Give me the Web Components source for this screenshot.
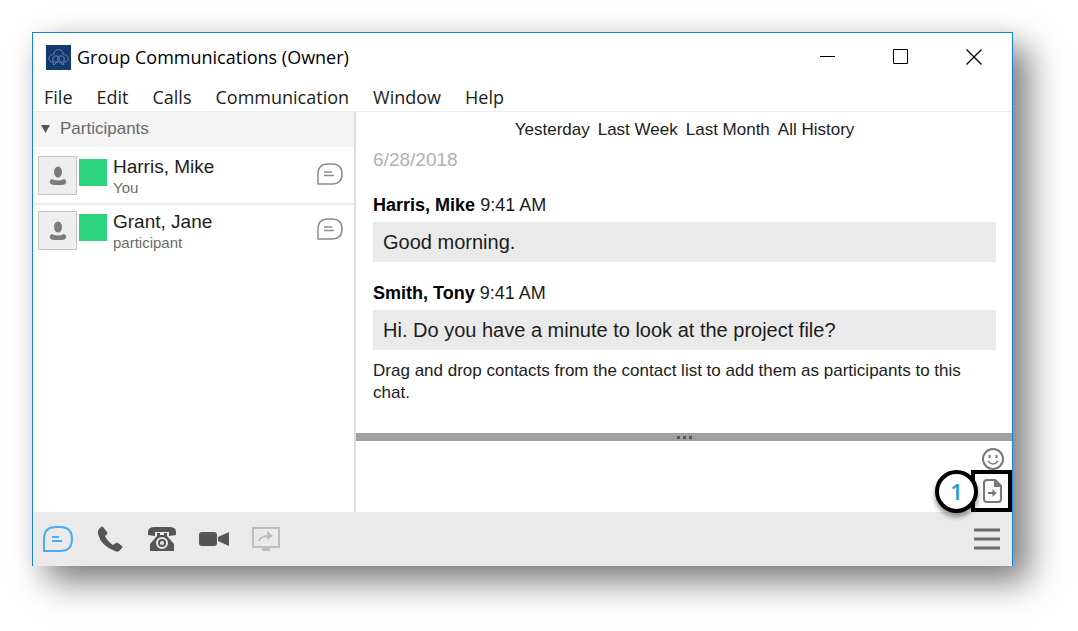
<!DOCTYPE html>
<html lang="en">
<head>
<meta charset="utf-8">
<title>Group Communications (Owner)</title>
<style>
    body {
        margin: 0;
        min-height: 100vh;
        box-sizing: border-box;
        padding: 32px 65px 65px 32px;
        display: flex;
        background: white;
        font-family: "Liberation Sans", Arial, sans-serif;
        color: #1c1c1c;
    }
</style>
</head>
<body>
<gc-window>
    <gc-title-bar slot="title">Group Communications (Owner)</gc-title-bar>
    <gc-menu-bar slot="menu" items="File,Edit,Calls,Communication,Window,Help"></gc-menu-bar>
    <gc-participants slot="sidebar">
        <gc-participant><span slot="name">Harris, Mike</span><span slot="role">You</span></gc-participant>
        <gc-participant><span slot="name">Grant, Jane</span><span slot="role">participant</span></gc-participant>
    </gc-participants>
    <gc-history slot="chat">
        <gc-message><span slot="author">Harris, Mike</span><span slot="time">9:41 AM</span>Good morning.</gc-message>
        <gc-message><span slot="author">Smith, Tony</span><span slot="time">9:41 AM</span>Hi. Do you have a minute to look at the project file?</gc-message>
    </gc-history>
    <gc-composer slot="chat"></gc-composer>
    <gc-toolbar slot="footer"></gc-toolbar>
</gc-window>

<script>
    const BUTTON_RESET = `
        button {
            display: flex;
            align-items: center;
            justify-content: center;
            margin: 0;
            padding: 0;
            border: 0;
            background: none;
            color: inherit;
            font: inherit;
        }
        svg { display: block; }
    `;

    class Window extends HTMLElement {
        constructor() {
            super();
            this.attachShadow({ mode: 'open' });
            this.shadowRoot.innerHTML = `
                <style>
                    :host {
                        flex: 1;
                        min-width: 0;
                        display: flex;
                        flex-direction: column;
                        background: white;
                        border: 1px solid #1883d7;
                        border-bottom: 0;
                        box-shadow: 16px 16px 32px rgba(0,0,0,0.5), 0 0 24px rgba(0,0,0,0.06);
                    }
                    main {
                        flex: 1;
                        display: grid;
                        grid-template-columns: minmax(200px, 33%) 1fr;
                        border-top: 1px solid #eeeeee;
                    }
                    aside { border-right: 2px solid #dddddd; }
                    section {
                        display: flex;
                        flex-direction: column;
                        min-width: 0;
                    }
                </style>
                <slot name="title"></slot>
                <slot name="menu"></slot>
                <main>
                    <aside><slot name="sidebar"></slot></aside>
                    <section><slot name="chat"></slot></section>
                </main>
                <slot name="footer"></slot>
            `;
        }
    }

    class TitleBar extends HTMLElement {
        constructor() {
            super();
            this.attachShadow({ mode: 'open' });
            this.shadowRoot.innerHTML = `
                <style>
                    ${BUTTON_RESET}
                    :host {
                        display: flex;
                        align-items: center;
                        height: 48px;
                        padding: 0 2px 0 13px;
                        font: 18px "Open Sans", "Noto Sans", sans-serif;
                        color: black;
                    }
                    h1 {
                        flex: 1;
                        margin: 0 0 0 6px;
                        font: inherit;
                    }
                    button {
                        width: 73px;
                        height: 48px;
                    }
                </style>
                <svg width="25" height="25" viewBox="0 0 25 25" fill="none" stroke="#6487b0">
                    <rect width="25" height="25" fill="#12396b" stroke="none"/>
                    <path d="M8 9c0-6 9-6 9 0M8 9c-6 1-7 7-2 8h1M17 9c6 1 7 7 2 8h-1M11 11H9c-3 0-3 6 0 6h2c3 0 3-6 0-6zM16 11h-2c-3 0-3 6 0 6h2c3 0 3-6 0-6zM7 17l1 3 3-3M18 17l-1 3-3-3"/>
                </svg>
                <h1><slot></slot></h1>
                <button aria-label="Minimize">
                    <svg width="16" height="16" stroke="black"><path d="M0 7.500h15"/></svg>
                </button>
                <button aria-label="Maximize">
                    <svg width="16" height="16" fill="none" stroke="black"><path d="M.5 .5h14v14h-14z"/></svg>
                </button>
                <button aria-label="Close">
                    <svg width="16" height="16" stroke="black" stroke-width="1.300"><path d="M.5 .5l15 15M15.500 .5l-15 15"/></svg>
                </button>
            `;
        }
    }

    class MenuBar extends HTMLElement {
        constructor() {
            super();
            this.attachShadow({ mode: 'open' });
            const items = this.getAttribute('items').split(',');
            this.shadowRoot.innerHTML = `
                <style>
                    ${BUTTON_RESET}
                    :host { display: block; }
                    nav {
                        display: flex;
                        gap: 24px;
                        height: 28px;
                        padding: 2px 11px 0;
                        font: 18px "Open Sans", "Noto Sans", sans-serif;
                        color: #1c1c1c;
                    }
                </style>
                <nav>${items.map(item => `<button>${item}</button>`).join('')}</nav>
            `;
        }
    }

    class Participants extends HTMLElement {
        constructor() {
            super();
            this.attachShadow({ mode: 'open' });
            this.shadowRoot.innerHTML = `
                <style>
                    ${BUTTON_RESET}
                    :host { display: block; }
                    button {
                        justify-content: flex-start;
                        gap: 10px;
                        width: 100%;
                        height: 35px;
                        margin-bottom: 3px;
                        padding: 0 8px 2px;
                        background: #f4f4f4;
                        color: #6a6a6a;
                        font-size: 17px;
                    }
                    ::slotted(gc-participant:not(:last-child)) { border-bottom: 2px solid #eeeeee; }
                </style>
                <button aria-expanded="true">
                    <svg width="9" height="8" fill="#555555"><path d="M0 0h9L4.500 8z"/></svg>
                    Participants
                </button>
                <slot></slot>
            `;
        }
    }

    class Participant extends HTMLElement {
        constructor() {
            super();
            this.attachShadow({ mode: 'open' });
            this.shadowRoot.innerHTML = `
                <style>
                    ${BUTTON_RESET}
                    :host {
                        display: flex;
                        align-items: flex-start;
                        padding: 6px 11px 5px 5px;
                    }
                    .avatar {
                        box-sizing: border-box;
                        width: 39px;
                        height: 39px;
                        padding: 9px 10px;
                        border: 1px solid #c4c4c4;
                        background: #eeeeee;
                    }
                    .presence {
                        width: 28px;
                        height: 27px;
                        margin: 3px 6px 0 2px;
                        background: #2bd47d;
                    }
                    .who {
                        flex: 1;
                        display: flex;
                        flex-direction: column;
                    }
                    .name {
                        font-size: 19px;
                        line-height: 22px;
                    }
                    .role {
                        font-size: 15px;
                        line-height: 20px;
                        color: #6a6a6a;
                    }
                    button { margin-top: 7px; }
                </style>
                <div class="avatar">
                    <svg width="18" height="20" fill="#7c7c7c">
                        <ellipse cx="9" cy="6" rx="4" ry="5.500"/>
                        <path d="M3 13q6 3 12 0q3 1 2 4q-1 2-4 2H5q-3 0-4-2q-1-3 2-4z"/>
                    </svg>
                </div>
                <div class="presence"></div>
                <div class="who">
                    <span class="name"><slot name="name"></slot></span>
                    <span class="role"><slot name="role"></slot></span>
                </div>
                <button aria-label="Chat">
                    <svg width="26" height="22" fill="none" stroke="#8c8c8c" stroke-width="1.500">
                        <path d="M1 21V11Q1 1 11 1H15Q25 1 25 11Q25 21 15 21Z"/>
                        <path d="M7 9h8M7 12.500h10"/>
                    </svg>
                </button>
            `;
        }
    }

    class History extends HTMLElement {
        constructor() {
            super();
            this.attachShadow({ mode: 'open' });
            this.shadowRoot.innerHTML = `
                <style>
                    :host {
                        flex: 1;
                        display: block;
                        padding: 6px 16px 0 17px;
                    }
                    nav {
                        display: flex;
                        justify-content: center;
                        gap: 8px;
                        font-size: 17px;
                        line-height: 24px;
                    }
                    a {
                        color: inherit;
                        text-decoration: none;
                    }
                    time {
                        display: block;
                        margin: 6px 0 21px;
                        font-size: 19px;
                        line-height: 24px;
                        color: #b0b0b0;
                    }
                    p {
                        margin: 0;
                        font-size: 17px;
                        line-height: 22px;
                    }
                </style>
                <nav>
                    <a href="#yesterday">Yesterday</a>
                    <a href="#week">Last Week</a>
                    <a href="#month">Last Month</a>
                    <a href="#all">All History</a>
                </nav>
                <time datetime="2018-06-28">6/28/2018</time>
                <slot></slot>
                <p>Drag and drop contacts from the contact list to add them as participants to this chat.</p>
            `;
        }
    }

    class Message extends HTMLElement {
        constructor() {
            super();
            this.attachShadow({ mode: 'open' });
            this.shadowRoot.innerHTML = `
                <style>
                    :host {
                        display: block;
                        margin-bottom: 19px;
                    }
                    :host(:last-child) { margin-bottom: 10px; }
                    header {
                        font-size: 18px;
                        line-height: 24px;
                        margin-bottom: 5px;
                    }
                    b { color: black; }
                    .text {
                        padding: 8px 10px;
                        background: #eaeaea;
                        font-size: 20px;
                        line-height: 24px;
                    }
                </style>
                <header><b><slot name="author"></slot></b> <slot name="time"></slot></header>
                <div class="text"><slot></slot></div>
            `;
        }
    }

    class Composer extends HTMLElement {
        constructor() {
            super();
            this.attachShadow({ mode: 'open' });
            this.shadowRoot.innerHTML = `
                <style>
                    ${BUTTON_RESET}
                    :host { display: block; }
                    .splitter {
                        display: flex;
                        align-items: center;
                        justify-content: center;
                        gap: 3px;
                        height: 8px;
                        background: #a0a0a0;
                    }
                    .splitter i {
                        width: 3px;
                        height: 3px;
                        background: #555555;
                    }
                    .row { display: flex; }
                    textarea {
                        flex: 1;
                        min-width: 0;
                        height: 71px;
                        box-sizing: border-box;
                        padding: 8px 16px;
                        border: 0;
                        outline: 0;
                        resize: none;
                        background: white;
                        font: 20px "Liberation Sans", Arial, sans-serif;
                    }
                    .actions {
                        display: flex;
                        flex-direction: column;
                        justify-content: flex-end;
                    }
                    .emoji {
                        width: 41px;
                        height: 22px;
                        padding-left: 2px;
                    }
                    .send {
                        position: relative;
                        box-sizing: border-box;
                        width: 41px;
                        height: 42px;
                        padding-left: 2px;
                        border: 4px solid black;
                        background: #fafafa;
                    }
                    .badge {
                        position: absolute;
                        right: 30px;
                        top: -4px;
                        box-sizing: border-box;
                        width: 43px;
                        height: 43px;
                        border: 4px solid black;
                        border-radius: 50%;
                        background: white;
                        box-shadow: 0 4px 5px rgba(0,0,0,0.4);
                        font: 600 22px/35px "Open Sans", "Noto Sans", sans-serif;
                        color: #1b9ad6;
                    }
                </style>
                <div class="splitter"><i></i><i></i><i></i></div>
                <div class="row">
                    <textarea aria-label="Message"></textarea>
                    <div class="actions">
                        <button class="emoji" aria-label="Insert emoticon">
                            <svg width="22" height="22" fill="none" stroke="#777777" stroke-width="2">
                                <circle cx="11" cy="11" r="10"/>
                                <path d="M6 13q5 6 10 0" stroke-width="1.500"/>
                                <path d="M7.500 7v3M14.500 7v3"/>
                            </svg>
                        </button>
                        <button class="send" aria-label="Send file">
                            <svg width="19" height="24" fill="none" stroke="#777777" stroke-width="2">
                                <path d="M4 1h8l6 6v13q0 3-3 3H4q-3 0-3-3V4q0-3 3-3z"/>
                                <path d="M12 1v6h6z" fill="#777777"/>
                                <path d="M5 14h7"/>
                                <path d="M9.500 10l4 4-4 4z" fill="#777777" stroke="none"/>
                            </svg>
                            <span class="badge">1</span>
                        </button>
                    </div>
                </div>
            `;
        }
    }

    class Toolbar extends HTMLElement {
        constructor() {
            super();
            this.attachShadow({ mode: 'open' });
            this.shadowRoot.innerHTML = `
                <style>
                    ${BUTTON_RESET}
                    :host {
                        display: flex;
                        align-items: center;
                        gap: 20px;
                        height: 54px;
                        padding: 0 9px;
                        background: #eaeaea;
                        color: #555555;
                    }
                    button {
                        width: 32px;
                        height: 32px;
                    }
                    .menu { margin-left: auto; }
                </style>
                <button aria-label="Chat">
                    <svg width="30" height="26" fill="none" stroke="#4daaf5" stroke-width="2">
                        <path d="M1 25V13Q1 1 13 1H17Q29 1 29 13Q29 25 17 25Z"/>
                        <path d="M9 11h7M9 15h10"/>
                    </svg>
                </button>
                <button aria-label="Call">
                    <svg width="26" height="26" fill="currentColor">
                        <path d="M6 1l4 5q1 1 0 2l-2 2q3 6 8 9l3-2q1-1 2 0l4 3q1 1 0 2l-3 3q-2 1-4 0Q4 20 1 8q-1-3 1-5l2-2q1-1 2 0z"/>
                    </svg>
                </button>
                <button aria-label="Call with desk phone">
                    <svg width="28" height="26" fill="currentColor">
                        <path d="M0 9V6q0-5 7-5h14q7 0 7 5v3l-7 1V6H7v4z"/>
                        <path d="M9 7h3v2h4V7h3v3l7 8v7H2v-7L9 10z"/>
                        <circle cx="14" cy="17" r="5" fill="#555555" stroke="#eaeaea" stroke-width="2"/>
                        <circle cx="14" cy="17" r="2" fill="#eaeaea"/>
                    </svg>
                </button>
                <button aria-label="Video">
                    <svg width="30" height="14" fill="currentColor">
                        <rect width="18" height="14" rx="3"/>
                        <path d="M19 5L30 0v14L19 9z"/>
                    </svg>
                </button>
                <button aria-label="Share screen" disabled>
                    <svg width="28" height="25" fill="none" stroke="#bdbdbd" stroke-width="2">
                        <path d="M1 1h26v19H1z"/>
                        <path d="M10 20h8v4h-8z" fill="#bdbdbd" stroke="none"/>
                        <path d="M7 14q1-5 10-5"/>
                        <path d="M15 4l6 5-6 4z" fill="#bdbdbd" stroke="none"/>
                    </svg>
                </button>
                <button class="menu" aria-label="More options">
                    <svg width="26" height="24" stroke="#6a6a6a" stroke-width="3"><path d="M0 3h26M0 12h26M0 21h26"/></svg>
                </button>
            `;
        }
    }

    customElements.define('gc-window', Window);
    customElements.define('gc-title-bar', TitleBar);
    customElements.define('gc-menu-bar', MenuBar);
    customElements.define('gc-participants', Participants);
    customElements.define('gc-participant', Participant);
    customElements.define('gc-history', History);
    customElements.define('gc-message', Message);
    customElements.define('gc-composer', Composer);
    customElements.define('gc-toolbar', Toolbar);
</script>
</body>
</html>
